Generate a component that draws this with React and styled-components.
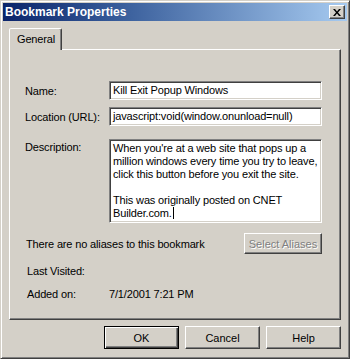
import React from 'react';
import styled, { createGlobalStyle } from 'styled-components';

const GlobalStyle = createGlobalStyle`
	body {
		margin: 0;
		background: #d4d0c8;
		font-family: 'Liberation Sans', Arial, sans-serif;
		font-size: 11px;
		letter-spacing: -0.15px;
		color: #000;
	}
`;

const description = [
	"When you're at a web site that pops up a",
	'million windows every time you try to leave,',
	'click this button before you exit the site.',
	'',
	'This was originally posted on CNET',
	'Builder.com.',
];

function App() {
	return (
		<>
			<GlobalStyle />
			<Window>
				{/* title */}
				<TitleBar>
					<Title>Bookmark Properties</Title>
					<CloseButton>
						<svg width="8" height="7" viewBox="0 0 8 7">
							<path d="M0 0h2l2 2.5L6 0h2L5 3.5 8 7H6L4 4.5 2 7H0l3-3.5z" fill="#000" />
						</svg>
					</CloseButton>
				</TitleBar>

				<Body>
					{/* tabs */}
					<TabStrip>
						<Tab>General</Tab>
					</TabStrip>

					<Panel>
						<Field>
							<Label>Name:</Label>
							<Input>Kill Exit Popup Windows</Input>
						</Field>
						<Field $top={7}>
							<Label>Location (URL):</Label>
							<Input>javascript:void(window.onunload=null)</Input>
						</Field>
						<Field $top={13} $align="start">
							<Label $pad={2}>Description:</Label>
							<TextArea>
								{description.map((line, i) => (
									<Line key={i}>
										{line || '\u00a0'}
										{i === description.length - 1 && <Caret />}
									</Line>
								))}
							</TextArea>
						</Field>

						<AliasRow>
							<InfoText>There are no aliases to this bookmark</InfoText>
							<Button $width={78} $height={21} disabled>
								Select Aliases
							</Button>
						</AliasRow>

						<Field $top={11}>
							<InfoLabel>Last Visited:</InfoLabel>
							<span />
						</Field>
						<Field $top={11}>
							<InfoLabel>Added on:</InfoLabel>
							<InfoText>7/1/2001 7:21 PM</InfoText>
						</Field>
					</Panel>

					{/* buttons */}
					<ButtonRow>
						<Button $default>OK</Button>
						<Button>Cancel</Button>
						<Button>Help</Button>
					</ButtonRow>
				</Body>
			</Window>
		</>
	);
}

export default App;

const Window = styled.div`
	box-sizing: border-box;
	width: 350px;
	height: 359px;
	display: flex;
	flex-direction: column;
	padding: 2px;
	background: #d4d0c8;
	border: 1px solid;
	border-color: #d4d0c8 #404040 #404040 #d4d0c8;
	box-shadow: inset 1px 1px #fff, inset -1px -1px #808080;
`;

const TitleBar = styled.div`
	height: 18px;
	display: flex;
	align-items: center;
	justify-content: space-between;
	padding: 0 2px 0 2px;
	background: linear-gradient(to right, #0a246a 0%, #3a5f9c 35%, #a6caf0 100%);
`;

const Title = styled.span`
	color: #fff;
	font-weight: bold;
	font-size: 12px;
	letter-spacing: 0;
`;

const CloseButton = styled.div`
	box-sizing: border-box;
	width: 16px;
	height: 14px;
	display: flex;
	align-items: center;
	justify-content: center;
	background: #d4d0c8;
	border: 1px solid;
	border-color: #fff #404040 #404040 #fff;
	box-shadow: inset -1px -1px #808080;
`;

const Body = styled.div`
	flex: 1;
	display: flex;
	flex-direction: column;
	padding: 7px 6px 0 6px;
`;

const TabStrip = styled.div`
	display: flex;
	height: 21px;
`;

const Tab = styled.div`
	position: relative;
	z-index: 1;
	box-sizing: border-box;
	width: 53px;
	height: 22px;
	padding: 4px 0 0 7px;
	background: #d4d0c8;
	border: 1px solid;
	border-bottom: none;
	border-color: #fff #404040 transparent #fff;
	border-radius: 2px 2px 0 0;
	box-shadow: inset -1px 0 #808080;
`;

const Panel = styled.div`
	box-sizing: border-box;
	height: 271px;
	display: flex;
	flex-direction: column;
	padding: 31px 18px 0 15px;
	border: 1px solid;
	border-color: #fff #404040 #404040 #fff;
	box-shadow: inset -1px -1px #808080;
`;

const Field = styled.div`
	display: grid;
	grid-template-columns: 84px 1fr;
	align-items: ${(p) => p.$align || 'center'};
	margin-top: ${(p) => p.$top || 0}px;
`;

const Label = styled.span`
	padding-top: ${(p) => p.$pad || 0}px;
`;

const sunken = `
	box-sizing: border-box;
	background: #fff;
	border: 1px solid;
	border-color: #808080 #fff #fff #808080;
	box-shadow: inset 1px 1px #404040, inset -1px -1px #d4d0c8;
`;

const Input = styled.div`
	${sunken}
	height: 19px;
	line-height: 17px;
	padding: 0 3px;
	white-space: nowrap;
	overflow: hidden;
`;

const TextArea = styled.div`
	${sunken}
	height: 84px;
	padding: 2px 3px;
	line-height: 13px;
`;

const Line = styled.div`
	white-space: nowrap;
`;

const Caret = styled.span`
	display: inline-block;
	width: 1px;
	height: 12px;
	margin-left: 1px;
	background: #000;
	vertical-align: -2px;
`;

const AliasRow = styled.div`
	display: flex;
	align-items: center;
	justify-content: space-between;
	margin-top: 10px;
	padding-left: 1px;
`;

const InfoText = styled.span``;

const InfoLabel = styled.span`
	padding-left: 2px;
`;

const ButtonRow = styled.div`
	display: flex;
	justify-content: flex-end;
	gap: 6px;
	margin-top: 6px;
`;

const Button = styled.button`
	box-sizing: border-box;
	width: ${(p) => p.$width || 75}px;
	height: ${(p) => p.$height || 23}px;
	padding: 0;
	font: inherit;
	color: #000;
	background: #d4d0c8;
	border: 1px solid;
	border-color: ${(p) => (p.$default ? '#000' : '#fff #404040 #404040 #fff')};
	box-shadow: ${(p) =>
		p.$default
			? 'inset 1px 1px #fff, inset -1px -1px #404040, inset -2px -2px #808080'
			: 'inset -1px -1px #808080'};

	&:disabled {
		color: #808080;
		text-shadow: 1px 1px #fff;
	}
`;
